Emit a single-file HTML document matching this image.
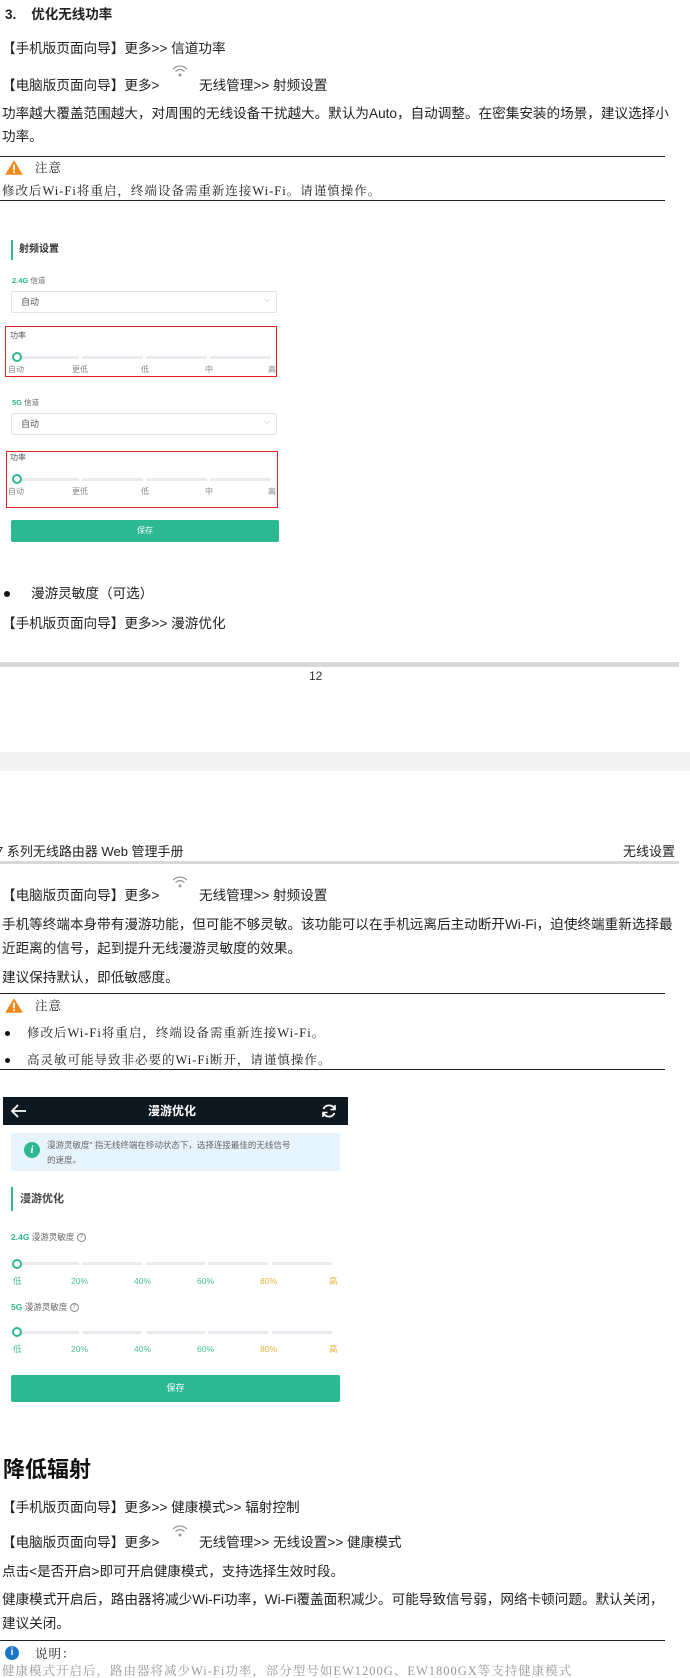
<!DOCTYPE html>
<html><head><meta charset="utf-8"><style>
*{margin:0;padding:0;box-sizing:border-box}
body{width:690px;height:1667px;position:relative;overflow:hidden;background:#fff;font-family:"Liberation Sans","Noto Sans CJK SC",sans-serif;color:#222}
.t{position:absolute;white-space:nowrap;font-size:13.6px;line-height:16px}
.s{position:absolute;white-space:nowrap;font-family:"Liberation Serif","Noto Serif CJK SC",serif;font-size:12.5px;line-height:14px;letter-spacing:1px;color:#222}
.hr{position:absolute;left:0;width:665px;height:1px;background:#222}
.box{position:absolute}
.lbl{position:absolute;font-size:8px;color:#888;white-space:nowrap;line-height:10px}
.seg{position:absolute;height:3px;background:#e8eaf0}
.circ{position:absolute;width:10px;height:10px;border:2px solid #2fb992;border-radius:50%;background:#fff}
</style></head><body>

<div class="t" style="top:7px;left:5px;font-weight:bold;font-size:13.5px">3.&nbsp;&nbsp;&nbsp;&nbsp;优化无线功率</div>
<div class="t" style="top:41px;left:2px">【手机版页面向导】更多&gt;&gt; 信道功率</div>
<div class="t" style="top:78px;left:2px">【电脑版页面向导】更多&gt;</div>
<svg class="box" style="left:172px;top:64px" width="16" height="14" viewBox="0 0 16 14"><path d="M1 5 Q8 -1 15 5" fill="none" stroke="#999" stroke-width="1.2"/><path d="M3.5 7.5 Q8 3.5 12.5 7.5" fill="none" stroke="#999" stroke-width="1.2"/><circle cx="8" cy="11" r="1.5" fill="#999"/></svg>
<div class="t" style="top:78px;left:199px">无线管理&gt;&gt; 射频设置</div>
<div class="t" style="top:106px;left:2px">功率越大覆盖范围越大，对周围的无线设备干扰越大。默认为Auto，自动调整。在密集安装的场景，建议选择小</div>
<div class="t" style="top:129px;left:2px">功率。</div>
<div class="hr" style="top:156px"></div>
<svg class="box" style="left:4px;top:159px" width="20" height="17" viewBox="0 0 18 15"><path d="M9 1 L17 14 L1 14 Z" fill="#f08a1c"/><rect x="8.2" y="5" width="1.6" height="5" fill="#fff"/><rect x="8.2" y="11" width="1.6" height="1.6" fill="#fff"/></svg>
<div class="s" style="top:161px;left:35px">注意</div>
<div class="s" style="top:184px;left:2px">修改后Wi-Fi将重启，终端设备需重新连接Wi-Fi。请谨慎操作。</div>
<div class="hr" style="top:200px"></div>

<div class="box" style="left:11px;top:240px;width:2px;height:20px;background:#2fb992"></div>
<div class="t" style="top:244px;left:19px;font-size:10px;line-height:12px;font-weight:bold;color:#333">射频设置</div>
<div class="t" style="top:276px;left:12px;font-size:7.5px;line-height:10px;color:#666"><b style="color:#2fb992">2.4G</b> 信道</div>
<div class="box" style="left:11px;top:291px;width:266px;height:22px;border:1px solid #e4e4e4;border-radius:2px"></div>
<div class="t" style="top:297px;left:21px;font-size:9px;line-height:10px;color:#555">自动</div>
<div class="t" style="top:295px;left:264px;font-size:8px;line-height:10px;color:#bbb">⌵</div>
<div class="box" style="left:5px;top:326px;width:272px;height:51px;border:1.5px solid #e82020"></div>
<div class="lbl" style="top:331px;left:10px;color:#555">功率</div>
<div class="seg" style="left:22px;width:57px;top:356px"></div><div class="seg" style="left:82px;width:61px;top:356px"></div><div class="seg" style="left:146px;width:61px;top:356px"></div><div class="seg" style="left:210px;width:61px;top:356px"></div>
<div class="circ" style="left:12px;top:352px"></div>
<div class="lbl" style="top:365px;left:8px">自动</div><div class="lbl" style="top:365px;left:72px">更低</div><div class="lbl" style="top:365px;left:141px">低</div><div class="lbl" style="top:365px;left:205px">中</div><div class="lbl" style="top:365px;left:268px">高</div>

<div class="t" style="top:398px;left:12px;font-size:7.5px;line-height:10px;color:#666"><b style="color:#2fb992">5G</b> 信道</div>
<div class="box" style="left:11px;top:413px;width:266px;height:22px;border:1px solid #e4e4e4;border-radius:2px"></div>
<div class="t" style="top:419px;left:21px;font-size:9px;line-height:10px;color:#555">自动</div>
<div class="t" style="top:417px;left:264px;font-size:8px;line-height:10px;color:#bbb">⌵</div>
<div class="box" style="left:6px;top:451px;width:272px;height:57px;border:1.5px solid #e82020"></div>
<div class="lbl" style="top:453px;left:10px;color:#555">功率</div>
<div class="seg" style="left:22px;width:57px;top:478px"></div><div class="seg" style="left:82px;width:61px;top:478px"></div><div class="seg" style="left:146px;width:61px;top:478px"></div><div class="seg" style="left:210px;width:61px;top:478px"></div>
<div class="circ" style="left:12px;top:474px"></div>
<div class="lbl" style="top:487px;left:8px">自动</div><div class="lbl" style="top:487px;left:72px">更低</div><div class="lbl" style="top:487px;left:141px">低</div><div class="lbl" style="top:487px;left:205px">中</div><div class="lbl" style="top:487px;left:268px">高</div>
<div class="box" style="left:11px;top:520px;width:268px;height:22px;background:#2db894;border-radius:2px;color:#fff;font-size:8px;text-align:center;line-height:22px">保存</div>

<div class="box" style="left:4px;top:591px;width:6px;height:6px;border-radius:50%;background:#111"></div>
<div class="t" style="top:586px;left:31px">漫游灵敏度（可选）</div>
<div class="t" style="top:616px;left:2px">【手机版页面向导】更多&gt;&gt; 漫游优化</div>
<div class="box" style="left:0;top:662px;width:679px;height:5px;background:#d8d8d8"></div>
<div class="t" style="top:668px;left:309px;font-size:12px;color:#333">12</div>
<div class="box" style="left:0;top:752px;width:690px;height:19px;background:#f3f3f3"></div>

<div class="t" style="top:844px;left:-4px;font-size:13px;color:#222">7 系列无线路由器 Web 管理手册</div>
<div class="t" style="top:844px;left:623px;font-size:13px;color:#222">无线设置</div>
<div class="box" style="left:0;top:861px;width:679px;height:3px;background:#d8d8d8"></div>
<div class="t" style="top:888px;left:2px">【电脑版页面向导】更多&gt;</div>
<svg class="box" style="left:172px;top:875px" width="16" height="14" viewBox="0 0 16 14"><path d="M1 5 Q8 -1 15 5" fill="none" stroke="#999" stroke-width="1.2"/><path d="M3.5 7.5 Q8 3.5 12.5 7.5" fill="none" stroke="#999" stroke-width="1.2"/><circle cx="8" cy="11" r="1.5" fill="#999"/></svg>
<div class="t" style="top:888px;left:199px">无线管理&gt;&gt; 射频设置</div>
<div class="t" style="top:917px;left:2px">手机等终端本身带有漫游功能，但可能不够灵敏。该功能可以在手机远离后主动断开Wi-Fi，迫使终端重新选择最</div>
<div class="t" style="top:941px;left:2px">近距离的信号，起到提升无线漫游灵敏度的效果。</div>
<div class="t" style="top:970px;left:2px">建议保持默认，即低敏感度。</div>
<div class="hr" style="top:993px"></div>
<svg class="box" style="left:4px;top:997px" width="20" height="17" viewBox="0 0 18 15"><path d="M9 1 L17 14 L1 14 Z" fill="#f08a1c"/><rect x="8.2" y="5" width="1.6" height="5" fill="#fff"/><rect x="8.2" y="11" width="1.6" height="1.6" fill="#fff"/></svg>
<div class="s" style="top:999px;left:35px">注意</div>
<div class="box" style="left:5px;top:1031px;width:5px;height:5px;border-radius:50%;background:#111"></div>
<div class="s" style="top:1026px;left:27px">修改后Wi-Fi将重启，终端设备需重新连接Wi-Fi。</div>
<div class="box" style="left:5px;top:1058px;width:5px;height:5px;border-radius:50%;background:#111"></div>
<div class="s" style="top:1053px;left:27px">高灵敏可能导致非必要的Wi-Fi断开，请谨慎操作。</div>
<div class="hr" style="top:1069px"></div>

<div class="box" style="left:3px;top:1097px;width:345px;height:28px;background:#0e1820"></div>
<svg class="box" style="left:10px;top:1103px" width="18" height="16" viewBox="0 0 18 16"><path d="M16 8 H2 M8 2 L2 8 L8 14" fill="none" stroke="#fff" stroke-width="1.8"/></svg>
<div class="t" style="top:1103px;left:148px;font-size:12px;font-weight:bold;color:#fff">漫游优化</div>
<svg class="box" style="left:321px;top:1103px" width="16" height="16" viewBox="0 0 16 16"><path d="M13.5 6 A6 6 0 0 0 2.5 6" fill="none" stroke="#fff" stroke-width="1.8"/><path d="M2.5 10 A6 6 0 0 0 13.5 10" fill="none" stroke="#fff" stroke-width="1.8"/><path d="M14 2 V6.5 H9.5" fill="none" stroke="#fff" stroke-width="1.6"/><path d="M2 14 V9.5 H6.5" fill="none" stroke="#fff" stroke-width="1.6"/></svg>
<div class="box" style="left:11px;top:1133px;width:329px;height:38px;background:#e8f4fd;border-radius:2px"></div>
<div class="box" style="left:24px;top:1142px;width:16px;height:16px;border-radius:50%;background:#2fb992;color:#fff;font-size:11px;font-weight:bold;font-style:italic;text-align:center;line-height:16px;font-family:'Liberation Serif',serif">i</div>
<div class="t" style="top:1140px;left:47px;font-size:8.5px;line-height:11px;color:#666">漫游灵敏度" 指无线终端在移动状态下，选择连接最佳的无线信号</div>
<div class="t" style="top:1155px;left:47px;font-size:8.5px;line-height:11px;color:#666">的速度。</div>
<div class="box" style="left:11px;top:1187px;width:2px;height:24px;background:#2fb992"></div>
<div class="t" style="top:1192px;left:20px;font-size:11px;line-height:14px;font-weight:bold;color:#444">漫游优化</div>
<div class="t" style="top:1232px;left:11px;font-size:8.5px;line-height:11px;color:#666"><b style="color:#2fb992">2.4G</b> 漫游灵敏度 <span style="display:inline-block;width:9px;height:9px;border:1px solid #888;border-radius:50%;font-size:6px;line-height:7px;text-align:center;vertical-align:middle">?</span></div>
<div class="seg" style="left:22px;width:57px;top:1262px"></div><div class="seg" style="left:82px;width:60px;top:1262px"></div><div class="seg" style="left:146px;width:59px;top:1262px"></div><div class="seg" style="left:208px;width:60px;top:1262px"></div><div class="seg" style="left:272px;width:60px;top:1262px"></div>
<div class="circ" style="left:12px;top:1259px"></div>
<div class="lbl" style="top:1276px;left:13px;font-size:8.5px;color:#4cbf99">低</div><div class="lbl" style="top:1276px;left:71px;font-size:8.5px;color:#4cbf99">20%</div><div class="lbl" style="top:1276px;left:134px;font-size:8.5px;color:#4cbf99">40%</div><div class="lbl" style="top:1276px;left:197px;font-size:8.5px;color:#4cbf99">60%</div><div class="lbl" style="top:1276px;left:260px;font-size:8.5px;color:#e8b53c">80%</div><div class="lbl" style="top:1276px;left:329px;font-size:8.5px;color:#e8b53c">高</div>
<div class="t" style="top:1302px;left:11px;font-size:8.5px;line-height:11px;color:#666"><b style="color:#2fb992">5G</b> 漫游灵敏度 <span style="display:inline-block;width:9px;height:9px;border:1px solid #888;border-radius:50%;font-size:6px;line-height:7px;text-align:center;vertical-align:middle">?</span></div>
<div class="seg" style="left:22px;width:57px;top:1331px"></div><div class="seg" style="left:82px;width:60px;top:1331px"></div><div class="seg" style="left:146px;width:59px;top:1331px"></div><div class="seg" style="left:208px;width:60px;top:1331px"></div><div class="seg" style="left:272px;width:60px;top:1331px"></div>
<div class="circ" style="left:12px;top:1327px"></div>
<div class="lbl" style="top:1344px;left:13px;font-size:8.5px;color:#4cbf99">低</div><div class="lbl" style="top:1344px;left:71px;font-size:8.5px;color:#4cbf99">20%</div><div class="lbl" style="top:1344px;left:134px;font-size:8.5px;color:#4cbf99">40%</div><div class="lbl" style="top:1344px;left:197px;font-size:8.5px;color:#4cbf99">60%</div><div class="lbl" style="top:1344px;left:260px;font-size:8.5px;color:#e8b53c">80%</div><div class="lbl" style="top:1344px;left:329px;font-size:8.5px;color:#e8b53c">高</div>
<div class="box" style="left:11px;top:1375px;width:329px;height:27px;background:#2db894;border-radius:2px;color:#fff;font-size:9px;text-align:center;line-height:27px">保存</div>

<div class="t" style="top:1458px;left:3px;font-size:22px;line-height:24px;font-weight:bold;color:#111">降低辐射</div>
<div class="t" style="top:1500px;left:2px">【手机版页面向导】更多&gt;&gt; 健康模式&gt;&gt; 辐射控制</div>
<div class="t" style="top:1535px;left:2px">【电脑版页面向导】更多&gt;</div>
<svg class="box" style="left:172px;top:1524px" width="16" height="14" viewBox="0 0 16 14"><path d="M1 5 Q8 -1 15 5" fill="none" stroke="#999" stroke-width="1.2"/><path d="M3.5 7.5 Q8 3.5 12.5 7.5" fill="none" stroke="#999" stroke-width="1.2"/><circle cx="8" cy="11" r="1.5" fill="#999"/></svg>
<div class="t" style="top:1535px;left:199px">无线管理&gt;&gt; 无线设置&gt;&gt; 健康模式</div>
<div class="t" style="top:1564px;left:2px">点击&lt;是否开启&gt;即可开启健康模式，支持选择生效时段。</div>
<div class="t" style="top:1592px;left:2px">健康模式开启后，路由器将减少Wi-Fi功率，Wi-Fi覆盖面积减少。可能导致信号弱，网络卡顿问题。默认关闭，</div>
<div class="t" style="top:1616px;left:2px">建议关闭。</div>
<div class="hr" style="top:1640px"></div>
<div class="box" style="left:5px;top:1646px;width:14px;height:14px;border-radius:50%;background:#1e78c8;color:#fff;font-size:10px;font-weight:bold;text-align:center;line-height:14px">i</div>
<div class="s" style="top:1647px;left:35px">说明：</div>
<div class="s" style="top:1664px;left:2px;color:#999">健康模式开启后，路由器将减少Wi-Fi功率，部分型号如EW1200G、EW1800GX等支持健康模式</div>
</body></html>
